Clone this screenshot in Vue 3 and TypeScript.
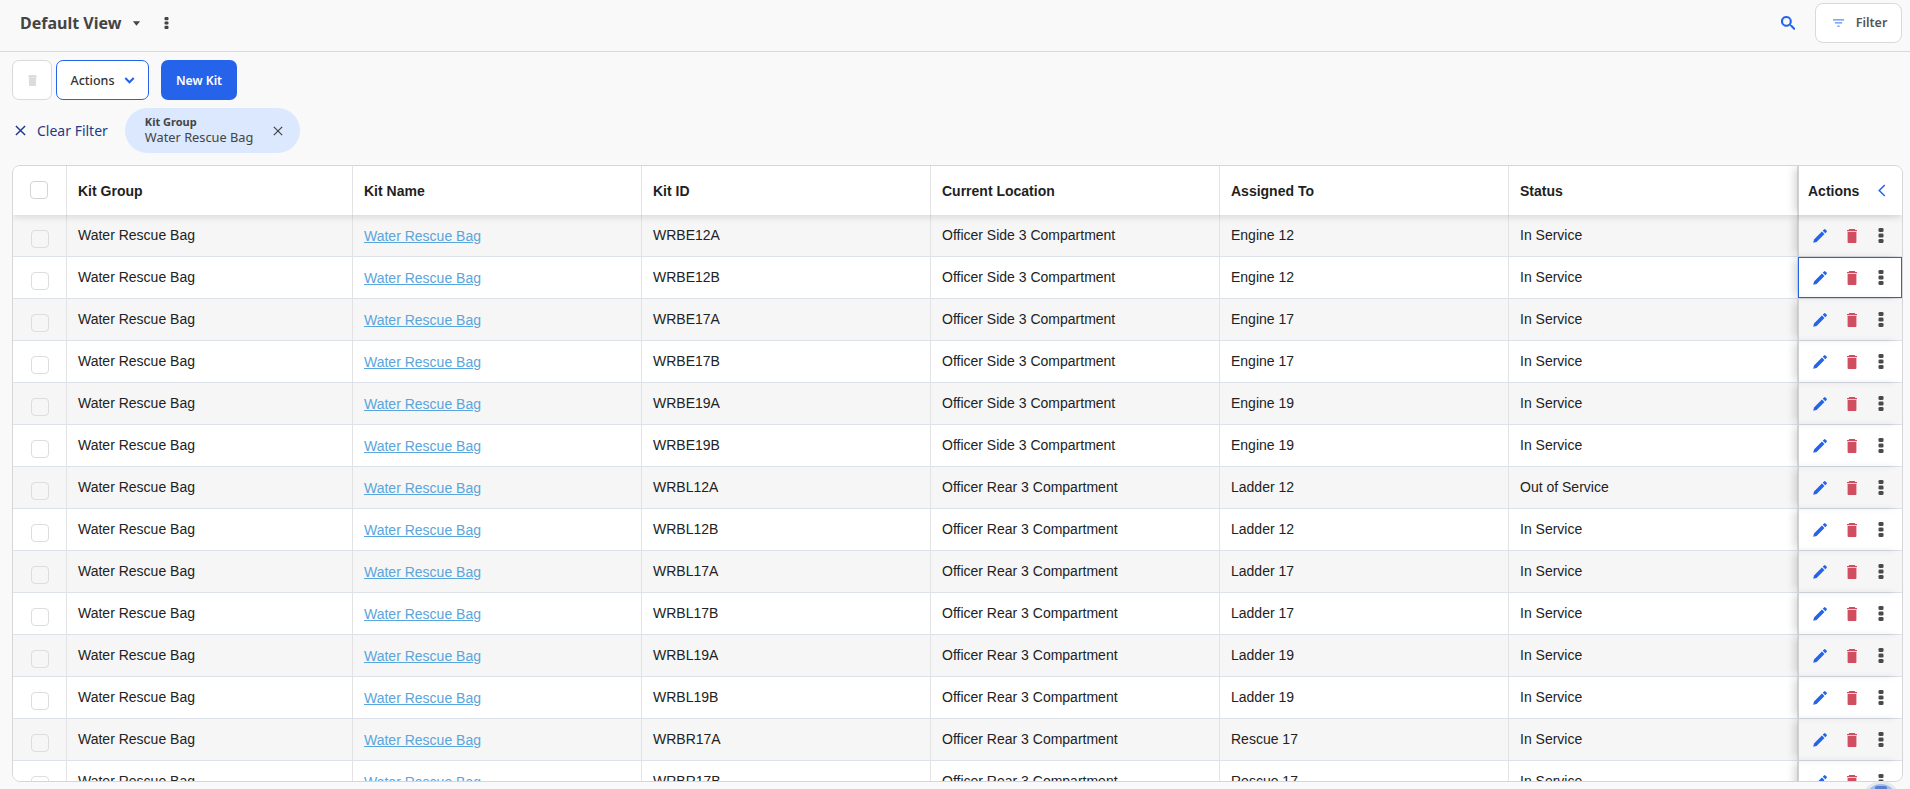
<script setup lang="ts">
interface Kit {
  id: string
  location: string
  assigned: string
  status: string
}

const side = 'Officer Side 3 Compartment'
const rear = 'Officer Rear 3 Compartment'

const kits: Kit[] = [
  { id: 'WRBE12A', location: side, assigned: 'Engine 12', status: 'In Service' },
  { id: 'WRBE12B', location: side, assigned: 'Engine 12', status: 'In Service' },
  { id: 'WRBE17A', location: side, assigned: 'Engine 17', status: 'In Service' },
  { id: 'WRBE17B', location: side, assigned: 'Engine 17', status: 'In Service' },
  { id: 'WRBE19A', location: side, assigned: 'Engine 19', status: 'In Service' },
  { id: 'WRBE19B', location: side, assigned: 'Engine 19', status: 'In Service' },
  { id: 'WRBL12A', location: rear, assigned: 'Ladder 12', status: 'Out of Service' },
  { id: 'WRBL12B', location: rear, assigned: 'Ladder 12', status: 'In Service' },
  { id: 'WRBL17A', location: rear, assigned: 'Ladder 17', status: 'In Service' },
  { id: 'WRBL17B', location: rear, assigned: 'Ladder 17', status: 'In Service' },
  { id: 'WRBL19A', location: rear, assigned: 'Ladder 19', status: 'In Service' },
  { id: 'WRBL19B', location: rear, assigned: 'Ladder 19', status: 'In Service' },
  { id: 'WRBR17A', location: rear, assigned: 'Rescue 17', status: 'In Service' },
  { id: 'WRBR17B', location: rear, assigned: 'Rescue 17', status: 'In Service' }
]

const columns = ['Kit Group', 'Kit Name', 'Kit ID', 'Current Location', 'Assigned To', 'Status']
</script>

<template>
  <div class="page">
    <header class="topbar">
      <div class="view">
        <span class="view-title">Default View</span>
        <svg class="caret" viewBox="0 0 10 5" width="9" height="5"><path d="M1 0h8L5 5z" /></svg>
        <svg class="dots-top" viewBox="0 0 6 15" width="5" height="12">
          <rect x=".5" y="0" width="5" height="4" rx="1.3" /><rect x=".5" y="5.5" width="5" height="4" rx="1.3" /><rect x=".5" y="11" width="5" height="4" rx="1.3" />
        </svg>
      </div>
      <div class="top-right">
        <svg class="search" viewBox="0 0 14 14" width="14" height="14">
          <path d="M5.4 0a5.400 5.400 0 0 1 4.400 8.500l.5.500.7.100 3 3a1 1 0 0 1 0 1.400l-.1.100a1 1 0 0 1-1.400 0l-3-3-.1-.7-.5-.5A5.400 5.400 0 1 1 5.400 0zm0 2.100a3.300 3.300 0 1 0 0 6.600 3.300 3.300 0 0 0 0-6.600z" />
        </svg>
        <button class="filter-btn">
          <svg viewBox="0 0 12 8" width="11" height="8"><path d="M0 0h12v1.300H0zM2 3.300h8v1.300H2zM4.800 6.700h2.400V8H4.800z" /></svg>
          <span>Filter</span>
        </button>
      </div>
    </header>

    <div class="toolbar">
      <button class="trash-btn">
        <svg viewBox="0 0 10 12" width="9" height="11"><path d="M1.500 0h7l.5 1H10v1H0V1h1zM1 2.500h8V11a1 1 0 0 1-1 1H2a1 1 0 0 1-1-1z" /></svg>
      </button>
      <button class="actions-btn">
        <span>Actions</span>
        <svg viewBox="0 0 12 8" width="11" height="7"><path d="M1.200 1.200 6 6l4.800-4.800" /></svg>
      </button>
      <button class="new-btn">New Kit</button>
    </div>

    <div class="filters">
      <button class="clear-btn">
        <svg viewBox="0 0 12 12" width="11" height="11"><path d="M1 1l10 10M11 1 1 11" /></svg>
        <span>Clear Filter</span>
      </button>
      <div class="chip">
        <div class="chip-text">
          <div class="chip-label">Kit Group</div>
          <div class="chip-value">Water Rescue Bag</div>
        </div>
        <svg viewBox="0 0 12 12" width="10" height="10"><path d="M1 1l10 10M11 1 1 11" /></svg>
      </div>
    </div>

    <div class="table-card">
      <div class="table-scroll">
        <div class="row head">
          <div class="cell check"><span class="box head-box"></span></div>
          <div v-for="c in columns" :key="c" class="cell">{{ c }}</div>
          <div class="cell act act-head">
            <span>Actions</span>
            <svg viewBox="0 0 8 14" width="8" height="13"><path d="M7 1 1 7l6 6" /></svg>
          </div>
        </div>
        <div v-for="(kit, i) in kits" :key="kit.id" class="row" :class="{ odd: i % 2 === 0 }">
          <div class="cell check"><span class="box"></span></div>
          <div class="cell">Water Rescue Bag</div>
          <div class="cell"><a class="kit-link">Water Rescue Bag</a></div>
          <div class="cell">{{ kit.id }}</div>
          <div class="cell">{{ kit.location }}</div>
          <div class="cell">{{ kit.assigned }}</div>
          <div class="cell">{{ kit.status }}</div>
          <div class="cell act" :class="{ focused: i === 1 }">
            <svg class="pencil" viewBox="0 0 14 14" width="14" height="14">
              <path d="M.2 13.800l.8-3.400L8.900 2.500l2.600 2.600-7.900 7.900zM9.700 1.700l1.300-1.300a1 1 0 0 1 1.400 0l1.200 1.200a1 1 0 0 1 0 1.400l-1.300 1.300z" />
            </svg>
            <svg class="bin" viewBox="0 0 10 14" width="10" height="14">
              <path d="M2.200 0h5.600l.6 1H10v1.300H0V1h1.600zM.6 3h8.800v10a1 1 0 0 1-1 1H1.600a1 1 0 0 1-1-1z" />
            </svg>
            <svg class="more" viewBox="0 0 6 15" width="6" height="15">
              <rect x=".5" y="0" width="5" height="4" rx="1.300" /><rect x=".5" y="5.500" width="5" height="4" rx="1.300" /><rect x=".5" y="11" width="5" height="4" rx="1.300" />
            </svg>
          </div>
        </div>
      </div>
    </div>

    <div class="fab"><span class="fab-mark"></span></div>
  </div>
</template>

<style scoped>
.page {
  position: relative;
  height: 789px;
  overflow: hidden;
  background: #f9f9f9;
  font-family: "Noto Sans", "Open Sans", sans-serif;
  color: #444;
}

.topbar {
  height: 52px;
  box-sizing: border-box;
  border-bottom: 1px solid #d9d9d9;
  display: flex;
  align-items: center;
  justify-content: space-between;
  padding: 0 8px 6px 20px;
}

.view {
  display: flex;
  align-items: center;
}

.view-title {
  font-size: 16px;
  font-weight: 700;
  color: #444;
}

.caret {
  margin-left: 11px;
  margin-top: 1px;
  fill: #444;
}

.dots-top {
  margin-left: 23px;
  fill: #444;
}

.top-right {
  display: flex;
  align-items: center;
  gap: 20px;
}

.search {
  fill: #2563eb;
}

.filter-btn {
  width: 87px;
  height: 40px;
  box-sizing: border-box;
  background: #fff;
  border: 1px solid #d9d9d9;
  border-radius: 8px;
  display: flex;
  align-items: center;
  justify-content: center;
  gap: 12px;
  font: 600 12.5px "Noto Sans", sans-serif;
  color: #555;
  padding: 0 0 0 3px;
}

.filter-btn svg {
  fill: #5b8cf5;
}

.toolbar {
  display: flex;
  align-items: center;
  padding: 8px 0 0 12px;
}

.trash-btn {
  width: 40px;
  height: 40px;
  box-sizing: border-box;
  background: #fff;
  border: 1px solid #d9d9d9;
  border-radius: 7px;
  display: flex;
  align-items: center;
  justify-content: center;
  padding: 0;
}

.trash-btn svg {
  fill: #dcdcdc;
}

.actions-btn {
  width: 93px;
  height: 40px;
  margin-left: 4px;
  box-sizing: border-box;
  background: #fff;
  border: 1px solid #2563eb;
  border-radius: 7px;
  display: flex;
  align-items: center;
  justify-content: center;
  gap: 9px;
  font: 500 12.5px "Noto Sans", sans-serif;
  color: #333;
  padding: 0;
}

.actions-btn svg {
  fill: none;
  stroke: #2563eb;
  stroke-width: 2.4;
}

.new-btn {
  width: 76px;
  height: 40px;
  margin-left: 12px;
  background: #2563eb;
  border: none;
  border-radius: 7px;
  color: #fff;
  font: 600 12.2px "Noto Sans", sans-serif;
  padding: 0;
}

.filters {
  display: flex;
  align-items: center;
  padding: 8px 0 0 15px;
}

.clear-btn {
  display: flex;
  align-items: center;
  gap: 11px;
  background: none;
  border: none;
  padding: 0;
  font: 400 14px "Noto Sans", sans-serif;
  color: #1e3a8a;
}

.clear-btn svg {
  fill: none;
  stroke: #1e3a8a;
  stroke-width: 1.6;
}

.chip {
  width: 175px;
  height: 45px;
  margin-left: 17px;
  box-sizing: border-box;
  border-radius: 23px;
  background: #dbe8fd;
  display: flex;
  align-items: center;
  justify-content: space-between;
  padding: 0 17px 0 20px;
}

.chip svg {
  fill: none;
  stroke: #444;
  stroke-width: 1.5;
}

.chip-label {
  font-size: 11px;
  font-weight: 700;
  line-height: 14px;
  color: #444;
}

.chip-value {
  font-size: 12.8px;
  line-height: 17px;
  color: #444;
}

.table-card {
  margin: 12px 7px 0 12px;
  height: 617px;
  box-sizing: border-box;
  background: #fff;
  border: 1px solid #d6d6d6;
  border-radius: 8px;
  overflow: hidden;
}

.row {
  display: grid;
  grid-template-columns: 54px 286px 289px 289px 289px 289px 289px 1fr;
  height: 42px;
  box-sizing: border-box;
  border-bottom: 1px solid #dde1ea;
  background: #fff;
  font-family: "Liberation Sans", Arial, sans-serif;
  font-size: 14px;
  color: #222;
}

.row.odd {
  background: #f6f6f6;
}

.row.head {
  position: relative;
  z-index: 1;
  height: 49px;
  border-bottom: none;
  box-shadow: 0 3px 6px rgba(0, 0, 0, 0.1);
  font-weight: 700;
  color: #1f1f1f;
}

.cell {
  display: flex;
  align-items: center;
  box-sizing: border-box;
  padding: 0 0 2px 11px;
  border-right: 1px solid #e3e3e6;
  white-space: nowrap;
}

.head .cell {
  padding-bottom: 0;
}

.check {
  padding: 6px 0 0 18px;
}

.box {
  width: 18px;
  height: 18px;
  box-sizing: border-box;
  border: 1px solid #ddd;
  border-radius: 4px;
  background: transparent;
}

.head .check {
  padding: 0 0 0 17px;
}

.head-box {
  margin-bottom: 1px;
  border-color: #d4d4d4;
  background: #fff;
}

.kit-link {
  color: #5aa5dc;
  text-decoration: underline;
  margin-top: 2px;
}

.act {
  position: relative;
  border-right: none;
  border-left: 1px solid #d0d0d0;
  padding: 0 0 0 14px;
  box-shadow: -6px 0 8px -2px rgba(0, 0, 0, 0.15);
  gap: 20px;
}

.head .act-head {
  padding: 0 0 0 9px;
  justify-content: flex-start;
  gap: 19px;
}

.act-head svg {
  fill: none;
  stroke: #2563eb;
  stroke-width: 1.6;
}

.focused {
  outline: 1px solid #2563eb;
  outline-offset: -1px;
}

.pencil {
  fill: #2563eb;
}

.bin {
  fill: #d14d60;
}

.more {
  fill: #4a4a4a;
  margin-left: 1px;
}

.fab {
  position: absolute;
  left: 1865px;
  top: 784px;
  width: 32px;
  height: 32px;
  border-radius: 50%;
  background: #9dbdf7;
  box-shadow: 0 0 0 3px #e8e8e8;
}

.fab-mark {
  display: block;
  width: 12px;
  height: 3px;
  margin: 2px auto 0;
  background: #5a7fc8;
  border-radius: 2px 2px 0 0;
}
</style>

<style>
html,
body {
  margin: 0;
  background: #f9f9f9;
}
</style>
